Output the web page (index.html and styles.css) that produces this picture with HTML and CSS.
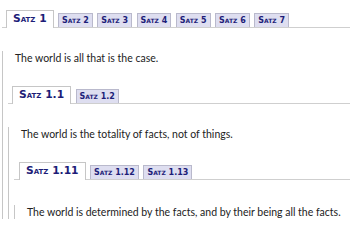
FILE: index.html
```html
<!DOCTYPE html>
<html lang="de">
<head>
<meta charset="utf-8">
<title>Satz</title>
<link rel="stylesheet" href="styles.css">
</head>
<body>
<div class="tabs">
  <ul class="tabbar">
    <li class="tab active">Satz 1</li>
    <li class="tab">Satz 2</li>
    <li class="tab">Satz 3</li>
    <li class="tab">Satz 4</li>
    <li class="tab">Satz 5</li>
    <li class="tab">Satz 6</li>
    <li class="tab">Satz 7</li>
  </ul>
  <div class="panel">
    <p class="text">The world is all that is the case.</p>
    <div class="tabs">
      <ul class="tabbar">
        <li class="tab active">Satz 1.1</li>
        <li class="tab">Satz 1.2</li>
      </ul>
      <div class="panel">
        <p class="text">The world is the totality of facts, not of things.</p>
        <div class="tabs">
          <ul class="tabbar">
            <li class="tab active">Satz 1.11</li>
            <li class="tab">Satz 1.12</li>
            <li class="tab">Satz 1.13</li>
          </ul>
          <div class="panel">
            <p class="text last">The world is determined by the facts, and by their being all the facts.</p>
          </div>
        </div>
      </div>
    </div>
  </div>
</div>
</body>
</html>
```

FILE: styles.css
```css
html, body {
  margin: 0;
  background: #ffffff;
}

body {
  padding: 10px 0 0 2px;
  font-family: Lato, "Liberation Sans", sans-serif;
  font-size: 10.5px;
  color: #222222;
  overflow: hidden;
}

.tabbar {
  display: flex;
  align-items: flex-end;
  gap: 4.5px;
  margin: 0;
  padding: 0 0 0 4px;
  list-style: none;
  border-bottom: 1px solid #cfcfcf;
}

.tab {
  display: flex;
  align-items: center;
  box-sizing: border-box;
  height: 14px;
  padding: 0 3px;
  border: 1px solid #b9b9cc;
  border-bottom: none;
  background: #dedef0;
  font-family: "DejaVu Sans", Verdana, sans-serif;
  font-weight: bold;
  font-variant: small-caps;
  font-size: 8px;
  line-height: 1;
  color: #1d1d78;
  white-space: nowrap;
}

.tab.active {
  height: 18px;
  margin-bottom: -1px;
  padding: 0 6px;
  border-color: #c6c6c6;
  background: #ffffff;
  font-size: 10.7px;
}

.panel {
  border-left: 1px solid #c6c6c6;
  padding-left: 5px;
}

.tabs .tabs .tabs .tabbar {
  padding-left: 5px;
}

.text {
  margin: 23px 0 21px 7px;
  line-height: 14px;
  white-space: nowrap;
}

.text.last {
  margin-top: 25px;
  margin-bottom: 60px;
}
```
